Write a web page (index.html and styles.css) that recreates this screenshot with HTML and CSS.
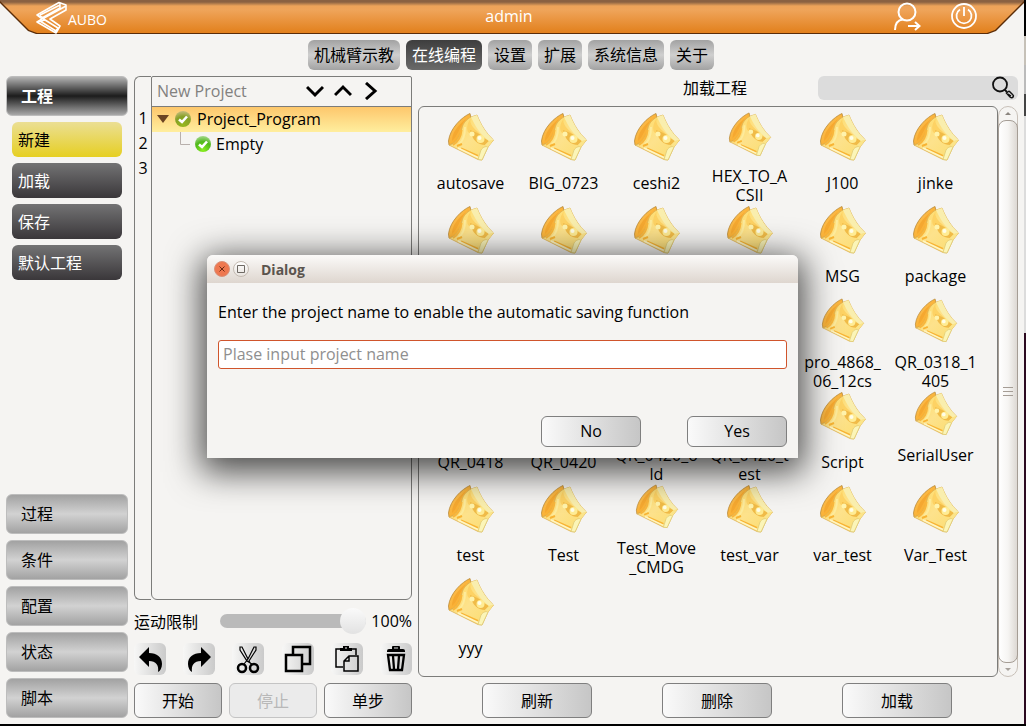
FILE: index.html
```html
<!DOCTYPE html>
<html lang="zh-CN">
  <head>
    <meta charset="utf-8">
    <title>AUBO</title>
    <link rel="stylesheet" href="styles.css">
  </head>
  <body>
    <!-- shared icons -->
    <svg class="sprite" aria-hidden="true">
      <defs>
        <linearGradient id="leaf" x1="0" y1="0" x2="1" y2="1">
          <stop offset="0" stop-color="#ffc766"/>
          <stop offset="1" stop-color="#f5a010"/>
        </linearGradient>
        <linearGradient id="face" x1="0" y1="0" x2="1" y2="1">
          <stop offset="0" stop-color="#ffd95c"/>
          <stop offset="0.5" stop-color="#fde28c"/>
          <stop offset="1" stop-color="#fbdc6c"/>
        </linearGradient>
        <radialGradient id="ball" cx="0.5" cy="0.9" r="0.9">
          <stop offset="0" stop-color="#8af01e"/>
          <stop offset="0.6" stop-color="#4fb81a"/>
          <stop offset="1" stop-color="#a6d890"/>
        </radialGradient>
        <radialGradient id="ball-on" cx="0.5" cy="0.9" r="0.9">
          <stop offset="0" stop-color="#98b81c"/>
          <stop offset="0.6" stop-color="#86a026"/>
          <stop offset="1" stop-color="#c6bc7c"/>
        </radialGradient>
      </defs>
      <symbol id="project" viewBox="0 0 48 48">
        <path d="M23 0.500 C15 4 3 15 1.500 28 L2 32 L10 30 L24 5 Z" fill="url(#leaf)" stroke="#b98a3a" stroke-width="0.800"/>
        <path d="M19 6 C10 13 5 20 5 28 C10 24 12 15 19 6Z" fill="#f5a830"/>
        <path d="M24 4 L30 2 C34 12 39 20 46.500 27 L41 34 L35 47 L31 46.500 L2 32 C9 31 13 24 15 15 C16 10 20 6 24 4 Z" fill="url(#face)" stroke="#dcb052" stroke-width="0.800"/>
        <path d="M24 5 C22 9 25 14 30 18 L36 24 L34 27 C28 24 24 22 21 19 C19 14 21 9 24 5Z" fill="#fdd264"/>
        <path d="M23 17 C28 19 34 21 37 25 L42 28 L38 32 C31 32 25 27 23 17Z" fill="#f0bb48"/>
        <path d="M14.500 17 C14 24 11 29 6 32" fill="none" stroke="#f9b63c" stroke-width="2"/>
        <path d="M18 14 C18 22 16 28 12 31" fill="none" stroke="#fdeb9c" stroke-width="2"/>
        <path d="M10 33 L15 31 M14 35.500 L31 43" stroke="#f8b434" stroke-width="2"/>
        <path d="M11 35 L31 44.500" stroke="#fff6c4" stroke-width="1.500"/>
        <path d="M24 4 L30 2 C34 12 39 20 46.500 27 L42 28 C33 21 28 13 24 4Z" fill="#f9eeae"/>
        <path d="M34 37 C36 34 39 33 41 34 L35 47 L31 46.500Z" fill="#fbf5b8" stroke="#e0cc78" stroke-width="0.800"/>
        <path d="M42 28 L46.500 27 L41 34 L38 32Z" fill="#fbe48a"/>
        <circle cx="25" cy="21" r="2.500" fill="#fff3ac"/>
        <circle cx="33.500" cy="26" r="4" fill="#ffec94"/>
        <circle cx="32.500" cy="25" r="2" fill="#fffde8"/>
      </symbol>
      <symbol id="check" viewBox="0 0 16 16">
        <path d="M4 8.500 L7 11 L12 5.500" fill="none" stroke="#fff" stroke-width="2.600"/>
      </symbol>
    </svg>

    <header class="topbar">
      <div class="brand">
        <svg width="32" height="33" viewBox="36 0 32 33" fill="none" stroke="#fff" stroke-linejoin="round">
          <path d="M37 14 L59 1.500 L66 4 V9 L50 18 L60 25 L56 32 L37 21 L42 18 Z" stroke-width="1.600"/>
          <path d="M37 14 L44 17 L66 5 M60 2 V7 L42 17 L58 27 M40 14 L60 4 M37 21 L45 19 L58 27 L55 31 M40 20 L56 30" stroke-width="1.500"/>
        </svg>
        <span>AUBO</span>
      </div>
      <span class="user">admin</span>
      <div class="session">
        <button type="button" aria-label="Switch user">
          <svg width="28" height="30" viewBox="0 0 28 30" fill="none" stroke="#fff" stroke-width="2">
            <circle cx="14" cy="10" r="8.500"/>
            <path d="M2 28 C2 22 5 18 10 17.500 M15 24 H26 M22 20 L26.500 24 L22 28"/>
          </svg>
        </button>
        <button type="button" aria-label="Power">
          <svg width="28" height="30" viewBox="0 0 28 30" fill="none" stroke="#fff" stroke-width="1.800">
            <circle cx="14" cy="14" r="12"/>
            <path d="M10 7.500 A7.500 7.500 0 1 0 18 7.500 M14 5 V14"/>
          </svg>
        </button>
      </div>
    </header>

    <nav class="tabs">
      <button type="button">机械臂示教</button>
      <button type="button" class="active">在线编程</button>
      <button type="button">设置</button>
      <button type="button">扩展</button>
      <button type="button">系统信息</button>
      <button type="button">关于</button>
    </nav>

    <main class="layout">
      <div class="sidebar">
        <button type="button" class="group open">工程</button>
        <button type="button" class="entry current">新建</button>
        <button type="button" class="entry">加载</button>
        <button type="button" class="entry">保存</button>
        <button type="button" class="entry">默认工程</button>
        <button type="button" class="group push">过程</button>
        <button type="button" class="group">条件</button>
        <button type="button" class="group">配置</button>
        <button type="button" class="group">状态</button>
        <button type="button" class="group">脚本</button>
      </div>

      <section class="program">
        <div class="editor">
          <ol class="gutter">
            <li>1</li>
            <li>2</li>
            <li>3</li>
          </ol>
          <div class="tree">
            <div class="tree-head">
              <span>New Project</span>
              <button type="button" aria-label="Down"><svg width="18" height="18" viewBox="0 0 18 18"><path d="M1 5 L9 13 L17 5"/></svg></button>
              <button type="button" aria-label="Up"><svg width="18" height="18" viewBox="0 0 18 18"><path d="M1 13 L9 5 L17 13"/></svg></button>
              <button type="button" aria-label="Next"><svg width="18" height="18" viewBox="0 0 18 18"><path d="M4 1 L13 9 L4 17"/></svg></button>
            </div>
            <div class="node selected">
              <svg width="12" height="8" viewBox="0 0 12 8"><path d="M0 0 H12 L6 8Z" fill="#6b4423"/></svg>
              <svg class="state" width="16" height="16"><circle cx="8" cy="8" r="8" fill="url(#ball-on)"/><use href="#check"/></svg>
              <span>Project_Program</span>
            </div>
            <div class="node child">
              <svg width="10" height="25" viewBox="0 0 10 25"><path d="M0.500 0 V12.500 H10" fill="none" stroke="#b8b0ac"/></svg>
              <svg class="state" width="16" height="16"><circle cx="8" cy="8" r="8" fill="url(#ball)"/><use href="#check"/></svg>
              <span>Empty</span>
            </div>
          </div>
        </div>

        <div class="speed">
          <label for="speed">运动限制</label>
          <input type="range" id="speed" min="0" max="100" value="100">
          <output for="speed">100%</output>
        </div>

        <div class="tools">
          <button type="button" aria-label="Undo">
            <svg width="32" height="32" viewBox="0 0 32 32"><path d="M5 14 L15 4 V10 C23 10 28 14 28 21 C28 25 26 28 24 29 C25 22 22 18 15 18 V24 Z"/></svg>
          </button>
          <button type="button" aria-label="Redo">
            <svg width="32" height="32" viewBox="0 0 32 32"><path d="M28 14 L18 4 V10 C10 10 5 14 5 21 C5 25 7 28 9 29 C8 22 11 18 18 18 V24 Z"/></svg>
          </button>
          <button type="button" aria-label="Cut">
            <svg width="32" height="32" viewBox="0 0 32 32">
              <g fill="none" stroke="#000">
                <circle cx="10" cy="25" r="4" stroke-width="2.500"/>
                <circle cx="22" cy="25" r="4" stroke-width="2.500"/>
                <path d="M12 21 L16 16 L22 4 L24 4 L24 7 L17 18 L19 21 M20 21 L15 18 L8 7 L8 4 L10 4 L16 16" stroke-width="1.200"/>
              </g>
            </svg>
          </button>
          <button type="button" aria-label="Copy">
            <svg width="32" height="32" viewBox="0 0 32 32"><path d="M11 11 V4 H28 V21 H21 M4 12 H20 V28 H4 Z" fill="none" stroke="#000" stroke-width="2.500"/></svg>
          </button>
          <button type="button" aria-label="Paste">
            <svg width="32" height="32" viewBox="0 0 32 32">
              <path d="M10 6 H5 V24 H12 M21 6 H25 V12 M18 13 H27 V28 H13 V18 Z M18 13 V18 H13" fill="none" stroke="#000" stroke-width="1.500"/>
              <path d="M9 5 H12 V3 H18 V5 H21 V8 H9 Z"/>
              <path d="M14 5 H16" stroke="#eee"/>
            </svg>
          </button>
          <button type="button" aria-label="Delete">
            <svg width="32" height="32" viewBox="0 0 32 32">
              <path d="M7 8 Q7 6 9 6 H12 V4 Q12 3 13 3 H19 Q20 3 20 4 V6 H23 Q25 6 25 8 V9 H7 Z"/>
              <path d="M14 5 H18" stroke="#ddd"/>
              <path d="M8 12 H24 L22 27 H10 Z M13 13 L14 26 M19 13 L18 26" fill="none" stroke="#000" stroke-width="2.300"/>
            </svg>
          </button>
        </div>

        <div class="run">
          <button type="button" class="btn">开始</button>
          <button type="button" class="btn" disabled>停止</button>
          <button type="button" class="btn">单步</button>
        </div>
      </section>

      <section class="browser">
        <div class="browser-head">
          <h2>加载工程</h2>
          <div class="search">
            <input type="text" aria-label="Search">
            <svg width="24" height="24" viewBox="0 0 24 24" fill="none" stroke="#111">
              <circle cx="9" cy="8.500" r="7" stroke-width="1.800"/>
              <path d="M13.500 13.500 L16 16" stroke-width="1.800"/>
              <path d="M18 15 L15.500 17 L19 21 Q21 22.500 22 21 Q23 19.500 21.500 18.500 L18 15 M17 18 L20 20" stroke-width="1.500"/>
            </svg>
          </div>
        </div>

        <div class="browser-body">
          <ul class="files">
            <li><svg><use href="#project"/></svg><span>autosave</span></li>
            <li><svg><use href="#project"/></svg><span>BIG_0723</span></li>
            <li><svg><use href="#project"/></svg><span>ceshi2</span></li>
            <li class="long"><svg><use href="#project"/></svg><span>HEX_TO_A<br>CSII</span></li>
            <li><svg><use href="#project"/></svg><span>J100</span></li>
            <li><svg><use href="#project"/></svg><span>jinke</span></li>

            <li><svg><use href="#project"/></svg></li>
            <li><svg><use href="#project"/></svg></li>
            <li><svg><use href="#project"/></svg></li>
            <li><svg><use href="#project"/></svg></li>
            <li><svg><use href="#project"/></svg><span>MSG</span></li>
            <li><svg><use href="#project"/></svg><span>package</span></li>

            <li class="long fifth"><svg><use href="#project"/></svg><span>pro_4868_<br>06_12cs</span></li>
            <li class="long"><svg><use href="#project"/></svg><span>QR_0318_1<br>405</span></li>

            <li><svg><use href="#project"/></svg><span>QR_0418</span></li>
            <li><svg><use href="#project"/></svg><span>QR_0420</span></li>
            <li class="long"><svg><use href="#project"/></svg><span>QR_0420_o<br>ld</span></li>
            <li class="long"><svg><use href="#project"/></svg><span>QR_0420_t<br>est</span></li>
            <li><svg><use href="#project"/></svg><span>Script</span></li>
            <li class="long"><svg><use href="#project"/></svg><span>SerialUser</span></li>

            <li><svg><use href="#project"/></svg><span>test</span></li>
            <li><svg><use href="#project"/></svg><span>Test</span></li>
            <li class="long"><svg><use href="#project"/></svg><span>Test_Move<br>_CMDG</span></li>
            <li><svg><use href="#project"/></svg><span>test_var</span></li>
            <li><svg><use href="#project"/></svg><span>var_test</span></li>
            <li><svg><use href="#project"/></svg><span>Var_Test</span></li>

            <li><svg><use href="#project"/></svg><span>yyy</span></li>
          </ul>
          <div class="scrollbar">
            <svg width="6" height="3" viewBox="0 0 8 4"><path d="M0 4 L4 0 L8 4Z" fill="#8a847e"/></svg>
            <div class="thumb"><i></i><i></i><i></i></div>
            <svg width="6" height="3" viewBox="0 0 8 4"><path d="M0 0 L4 4 L8 0Z" fill="#a8a29c"/></svg>
          </div>
        </div>

        <div class="actions">
          <button type="button" class="btn">刷新</button>
          <button type="button" class="btn">删除</button>
          <button type="button" class="btn">加载</button>
        </div>
      </section>
    </main>

    <div class="dialog" role="dialog" aria-labelledby="dialog-title">
      <div class="titlebar">
        <button type="button" class="close" aria-label="Close"><svg width="8" height="8" viewBox="0 0 8 8"><path d="M1.500 1.500 L6.500 6.500 M6.500 1.500 L1.500 6.500" stroke="#6b2a14"/></svg></button>
        <button type="button" aria-label="Maximize"><svg width="8" height="8" viewBox="0 0 8 8"><path d="M0.500 0.500 H7.500 V7.500 H0.500 Z" fill="none" stroke="#6f6a64"/></svg></button>
        <strong id="dialog-title">Dialog</strong>
      </div>
      <form class="dialog-body">
        <label for="project-name">Enter the project name to enable the automatic saving function</label>
        <input type="text" id="project-name" placeholder="Plase input project name">
        <div class="dialog-buttons">
          <button type="button" class="btn">No</button>
          <button type="button" class="btn">Yes</button>
        </div>
      </form>
    </div>
  </body>
</html>
```
FILE: styles.css
```css
* {
  box-sizing: border-box;
}
body {
  position: relative;
  margin: 0;
  padding-right: 2px;
  min-height: 100vh;
  display: flex;
  flex-direction: column;
  background: #f5f4f2;
  border-bottom: 2px solid #000;
  color: #000;
  font-family: "Open Sans", "Noto Sans CJK SC", sans-serif;
  font-size: 16px;
}
/* sliver of the desktop behind the window */
body::after {
  content: "";
  position: absolute;
  top: 0;
  right: 0;
  bottom: 0;
  width: 2px;
  background: linear-gradient(#000 0 5%, #c6c1b8 5% 9%, #bbb 9% 13%, #444 13% 16%, #dcdcdc 16% 46%, #2c0a20 46%);
}
button, input {
  font: inherit;
  color: inherit;
  margin: 0;
}
button {
  padding: 0;
  border: none;
  background: none;
  cursor: pointer;
}
svg {
  display: block;
}
.sprite {
  position: absolute;
  width: 0;
  height: 0;
}

/* top bar */
.topbar {
  position: relative;
  height: 34px;
  display: grid;
  grid-template-columns: 1fr auto 1fr;
  align-items: center;
  padding: 0 46px 0 36px;
  color: #fff;
  background: #5a2c08;
  clip-path: polygon(0 0, 100% 0, 100% 3px, calc(100% - 28px) 31px, calc(100% - 36px) 34px, 36px 34px, 28px 31px, 0 3px);
}
.topbar::before {
  content: "";
  position: absolute;
  inset: 0 0 1px;
  background: linear-gradient(#8a6142 0, #8a6142 2px, #eda35a 6px, #efa45a 10px, #e2801c);
  clip-path: polygon(0 0, 100% 0, 100% 1px, calc(100% - 29px) 30px, calc(100% - 37px) 33px, 37px 33px, 29px 30px, 0 1px);
}
.topbar > * {
  position: relative;
}
.brand {
  display: flex;
  align-items: center;
  font-size: 14px;
}
.brand span {
  padding-top: 4px;
}
.user {
  padding: 0 0 2px 4px;
}
.session {
  display: flex;
  justify-content: flex-end;
  align-items: center;
  gap: 29px;
}

/* main tabs */
.tabs {
  display: flex;
  justify-content: center;
  gap: 6px;
  padding: 6px 2px 0 0;
}
.tabs button {
  height: 30px;
  padding: 0 6px;
  border-radius: 6px;
  line-height: 30px;
  background: linear-gradient(#a2a2a2, #cfcfcf 50%, #a2a2a2);
}
.tabs .active {
  color: #fff;
  background: linear-gradient(#3e3e3e, #6a6a6a);
}

.layout {
  flex: 1;
  display: grid;
  grid-template-columns: 122px 278px 1fr;
  gap: 6px;
  padding: 6px;
}

/* left menu */
.sidebar {
  display: flex;
  flex-direction: column;
  gap: 6px;
}
.sidebar button {
  padding-bottom: 2px;
  text-align: left;
}
.group {
  height: 40px;
  padding-left: 14px;
  border: 1px solid #bdbdbd;
  border-radius: 6px;
  background: linear-gradient(#a2a2a2, #d2d2d2 50%, #a2a2a2);
}
.group.open {
  color: #fff;
  font-weight: bold;
  background: linear-gradient(#b4b4b4, #1c1c1c 50%, #a8a8a8);
}
.group.push {
  margin-top: auto;
}
.entry {
  height: 35px;
  margin: 0 6px;
  padding-left: 6px;
  border-radius: 6px;
  color: #fff;
  background: linear-gradient(#737374, #3a373a);
}
.entry.current {
  color: #000;
  background: linear-gradient(#ebdf94, #e6cf22);
}

/* program tree */
.program {
  display: flex;
  flex-direction: column;
}
.editor {
  flex: 1;
  display: flex;
}
.gutter {
  width: 17px;
  margin: 0;
  padding: 29px 0 0;
  list-style: none;
  text-align: center;
  line-height: 25px;
  border: 1px solid #7c7c7a;
  border-right: none;
  border-radius: 6px 0 0 6px;
}
.tree {
  flex: 1;
  border: 1px solid #7c7c7a;
  border-radius: 2px 2px 6px 6px;
}
.tree-head {
  display: flex;
  align-items: center;
  gap: 10px;
  height: 30px;
  padding: 0 31px 2px 5px;
  color: #82817f;
  border-bottom: 1px solid #7c7c7a;
}
.tree-head span {
  flex: 1;
}
.tree-head path {
  fill: none;
  stroke: #000;
  stroke-width: 3;
}
.node {
  display: flex;
  align-items: center;
  gap: 6px;
  height: 25px;
  padding: 0 0 1px 5px;
}
.node.selected {
  background: linear-gradient(#fdc76c, #ffee9e);
}
.node.child {
  padding-left: 28px;
  gap: 5px;
}

/* speed limit */
.speed {
  display: flex;
  align-items: center;
  justify-content: space-between;
  height: 26px;
  margin: 8px 0 9px;
}
.speed input {
  -webkit-appearance: none;
  appearance: none;
  width: 146px;
  height: 14px;
  margin-left: 16px;
  border-radius: 7px;
  background: #bababa;
}
.speed input::-webkit-slider-thumb {
  -webkit-appearance: none;
  width: 26px;
  height: 26px;
  border-radius: 50%;
  background: linear-gradient(#fafafa, #e2e2e2);
}

.tools {
  display: flex;
  justify-content: space-between;
  margin-bottom: 8px;
}
.tools button {
  border-radius: 6px;
  background: linear-gradient(90deg, #f7f7f6, #cacaca);
}

/* push buttons */
.btn {
  height: 35px;
  padding-bottom: 2px;
  border: 1px solid #7f7f7f;
  border-radius: 6px;
  background: linear-gradient(90deg, #fafafa, #c6c6c6);
}
.btn:disabled {
  color: #b8b8b8;
  border-color: #c4c4c4;
  background: #ebebeb;
}
.run {
  display: grid;
  grid-template-columns: repeat(3, 1fr);
  gap: 7px;
}

/* project browser */
.browser {
  display: flex;
  flex-direction: column;
}
.browser-head {
  display: grid;
  grid-template-columns: 1fr auto 1fr;
  height: 24px;
  margin-bottom: 6px;
}
.browser-head h2 {
  grid-column: 2;
  margin: 0 6px 0 0;
  font-size: 16px;
  font-weight: normal;
  line-height: 24px;
}
.search {
  justify-self: end;
  display: flex;
  width: 200px;
  padding-right: 3px;
  border-radius: 6px;
  background: #dcdcdc;
}
.search input {
  flex: 1;
  min-width: 0;
  border: none;
  outline: none;
  background: none;
}
.browser-body {
  flex: 1;
  display: flex;
}
.files {
  flex: 1;
  display: grid;
  grid-template-columns: repeat(auto-fill, 93px);
  grid-auto-rows: 93px;
  margin: 0;
  padding: 5px;
  list-style: none;
  border: 1px solid #7c7c7a;
  border-radius: 6px;
}
.files li {
  display: flex;
  flex-direction: column;
  align-items: center;
  gap: 12px;
  text-align: center;
  line-height: 19px;
}
.files svg {
  width: 48px;
  height: 50px;
  flex: none;
}
.files .long {
  gap: 10px;
}
.files .long svg {
  width: 44px;
  height: 45px;
}
.files .fifth {
  grid-column: 5;
}
.scrollbar {
  width: 20px;
  display: flex;
  flex-direction: column;
  align-items: center;
  padding: 5px 0;
  gap: 5px;
  border: 1px solid #c8c0b8;
  border-radius: 10px;
}
.thumb {
  flex: 1;
  width: 20px;
  display: flex;
  flex-direction: column;
  align-items: center;
  justify-content: center;
  gap: 3px;
  border: 1px solid #a59d95;
  border-radius: 8px;
  background: linear-gradient(90deg, #fff, #f6f5f3 50%, #ddd8d3);
}
.thumb i {
  width: 10px;
  height: 1px;
  background: #a59d95;
}
.actions {
  display: flex;
  justify-content: center;
  gap: 70px;
  padding-right: 2px;
  margin-top: 6px;
}
.actions .btn {
  width: 110px;
}

/* dialog */
.dialog {
  position: absolute;
  left: 207px;
  top: 255px;
  width: 591px;
  border-radius: 6px 6px 0 0;
  background: #f5f4f2;
  box-shadow: 0 8px 34px 6px rgba(0, 0, 0, 0.7);
}
.titlebar {
  display: flex;
  align-items: center;
  gap: 3px;
  height: 28px;
  padding-left: 7px;
  border-radius: 6px 6px 0 0;
  color: #5b544e;
  background: linear-gradient(#fbfaf9, #ded6cf);
}
.titlebar button {
  display: grid;
  place-items: center;
  width: 16px;
  height: 16px;
  border: 1px solid #c4bbb2;
  border-radius: 50%;
  background: linear-gradient(#fff, #e8e3de);
}
.titlebar .close {
  border-color: #d9917a;
  background: #ee7850;
}
.titlebar strong {
  margin-left: 9px;
  font-size: 14px;
}
.dialog-body {
  padding: 19px 11px 11px;
}
.dialog-body label {
  display: block;
  line-height: 20px;
}
.dialog-body input {
  display: block;
  width: 100%;
  height: 29px;
  margin: 18px 0 47px;
  padding: 0 4px 2px;
  border: 1px solid #d0552c;
  border-radius: 3px;
  background: #fff;
  outline: none;
}
.dialog-body input::placeholder {
  color: #8f8f8f;
}
.dialog-buttons {
  display: flex;
  justify-content: flex-end;
  gap: 46px;
}
.dialog-buttons .btn {
  width: 100px;
  height: 31px;
}
```
